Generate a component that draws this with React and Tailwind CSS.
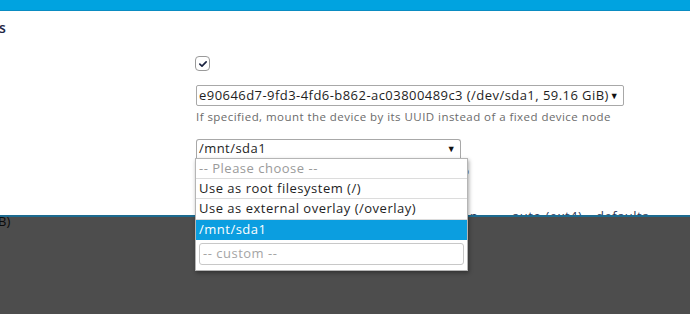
export default function App() {
  return (
    <div
      className="relative w-[690px] h-[314px] overflow-hidden bg-[#4d4d4d]"
      style={{ fontFamily: '"Open Sans", "Liberation Sans", sans-serif' }}
    >
      {/* modal panel */}
      <div className="h-[217px] bg-white border-b-2 border-[#1d6b90] overflow-hidden flex flex-col">
        <div className="h-[11px] shrink-0 bg-[#00a3e0] border-b border-[#0a8cc2]" />
        <div className="h-[32px] flex items-center text-[14px] font-semibold text-[#1e2745] -ml-[1px]">s</div>

        <div className="flex flex-col pl-[195px] tracking-[0.45px]">
          <div className="h-[13px]" />
          <div className="w-[15px] h-[15px] rounded-[4px] border border-[#9a9a9a] flex items-center justify-center">
            <svg viewBox="0 0 12 12" className="w-[10px] h-[10px]">
              <path d="M2.2 6.2 L4.8 8.6 L9.8 3.4" fill="none" stroke="#1a2340" strokeWidth="2" strokeLinecap="round" strokeLinejoin="round" />
            </svg>
          </div>

          <div className="h-[14px]" />
          <div className="w-[428px] h-[21px] ml-[1px] border border-[#a8a8a8] rounded-[2px] flex items-center justify-between pl-[2px] pr-[4px] text-[13px] text-[#1e1e1e]">
            <span className="whitespace-nowrap">e90646d7-9fd3-4fd6-b862-ac03800489c3 (/dev/sda1, 59.16 GiB)</span>
            <span className="text-[9px] text-[#111]">▼</span>
          </div>
          <div className="h-[22px] flex items-center text-[11.5px] tracking-[0.45px] text-[#6b6b6b] whitespace-nowrap pl-[1px]">
            If specified, mount the device by its UUID instead of a fixed device node
          </div>

          <div className="h-[11px]" />
          <div className="w-[265px] h-[21px] ml-[1px] border border-[#a8a8a8] border-b-2 border-b-[#1a2340] rounded-t-[3px] flex items-center justify-between pl-[2px] pr-[4px] text-[13px] text-[#1e1e1e]">
            <span>/mnt/sda1</span>
            <span className="text-[9px] text-[#111]">▼</span>
          </div>
          <div className="h-[22px] flex items-center text-[11.5px] tracking-[0.45px] text-[#6b6b6b] whitespace-nowrap pl-[1px]">
            Specifies the directory the device is attached to
          </div>
        </div>

        <div className="mt-auto h-[4px] relative text-[13px] tracking-[0.5px] text-[#2d3a5a] whitespace-nowrap">
          <span className="absolute left-[462px] top-[-4px]">en</span>
          <span className="absolute left-[512px] top-[-4px]">auto (ext4)</span>
          <span className="absolute left-[596px] top-[-4px]">defaults</span>
        </div>
      </div>

      {/* page text under the overlay */}
      <div className="h-[14px] -mt-[2px] flex items-center text-[13px] text-[#0b0b0b] -ml-[2px]">B)</div>

      {/* open dropdown list */}
      <div className="absolute left-[195px] top-[158px] w-[273px] h-[113px] bg-white border border-[#b5b5b5] shadow-[1px_2px_4px_rgba(0,0,0,0.35)] text-[13px] tracking-[0.5px] text-[#1e1e1e]">
        <div className="h-[20px] flex items-center px-[3px] border-b border-[#dcdcdc] text-[#9a9a9a]">-- Please choose --</div>
        <div className="h-[20px] flex items-center px-[3px] border-b border-[#dcdcdc]">Use as root filesystem (/)</div>
        <div className="h-[21px] flex items-center px-[3px] border-b border-[#dcdcdc]">Use as external overlay (/overlay)</div>
        <div className="h-[20px] flex items-center px-[3px] bg-[#0b9ee0] text-white">/mnt/sda1</div>
        <div className="px-[3px] pt-[3px]">
          <div className="h-[22px] border border-[#c8c8c8] rounded-[3px] flex items-center px-[3px] text-[#a5a5a5]">-- custom --</div>
        </div>
      </div>
    </div>
  );
}
